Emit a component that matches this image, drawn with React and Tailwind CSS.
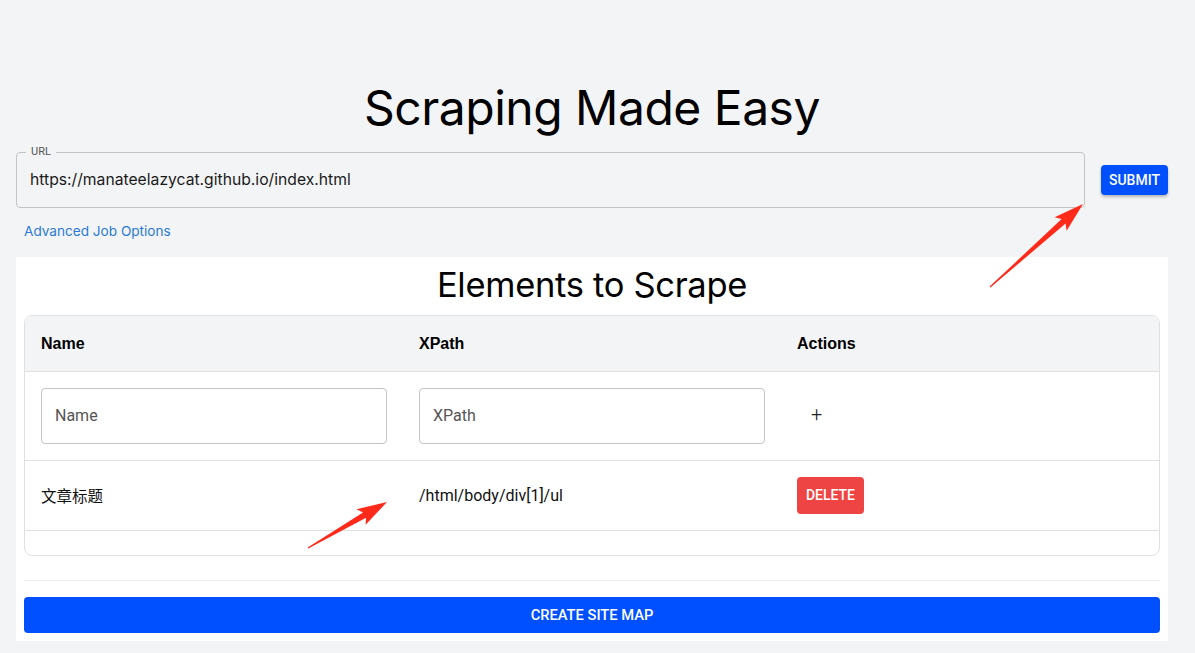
import React from 'react'

// red annotation arrow, drawn from tail to tip
const Arrow = ({ x1, y1, x2, y2 }) => {
  const dx = x2 - x1
  const dy = y2 - y1
  const len = Math.hypot(dx, dy)
  const ux = dx / len
  const uy = dy / len
  const nx = -uy
  const ny = ux
  const at = (d, w) => `${x1 + ux * d + nx * w},${y1 + uy * d + ny * w}`
  const head = 26
  const pts = [
    at(0, 0.6),
    at(len - head, 3),
    at(len - head - 4, 9),
    at(len, 0),
    at(len - head - 4, -9),
    at(len - head, -3),
    at(0, -0.6),
  ].join(' ')
  return <polygon points={pts} fill="#ff2a1a" />
}

const App = () => {
  return (
    <div className="relative min-h-screen bg-[#f3f4f6] font-['Inter',sans-serif]">
      <div className="pl-4 pr-[27px] pt-[84px] pb-3">
        <h1 className="text-center text-[48px] leading-[48px] text-black tracking-[-0.5px]">
          Scraping Made Easy
        </h1>

        <div className="mt-5 flex items-center gap-4">
          <div className="relative flex-1 h-14 rounded border border-[#c4c4c4]">
            <span className="absolute -top-[8px] left-[9px] bg-[#f3f4f6] px-[5px] text-[11px] leading-[14px] text-[#555] font-['Roboto',sans-serif]">
              URL
            </span>
            <div className="flex h-full items-center px-[13px] text-[15.7px] text-[#1a1a1a]">
              https://manateelazycat.github.io/index.html
            </div>
          </div>
          <button className="h-[30px] w-[67px] rounded bg-[#0050ff] text-[14px] font-medium uppercase text-white shadow-[0_2px_3px_rgba(0,0,0,0.25)] font-['Roboto',sans-serif]">
            Submit
          </button>
        </div>

        <div className="mt-[13px] pl-2 text-[13.6px] leading-5 text-[#2a7ad6]">
          Advanced Job Options
        </div>

        <div className="mt-4 bg-white p-2">
          <h2 className="text-center text-[34.5px] leading-[40px] text-black tracking-[-0.3px]">
            Elements to Scrape
          </h2>

          <div className="mt-[10px] overflow-hidden rounded-lg border border-[#e0e0e0] font-['Roboto',sans-serif] text-[16px] text-[#111]">
            <div className="grid h-14 grid-cols-3 items-center border-b border-[#e0e0e0] bg-[#f3f4f6] font-bold font-['Liberation_Sans',sans-serif] text-black">
              <div className="px-4">Name</div>
              <div className="px-4">XPath</div>
              <div className="px-4">Actions</div>
            </div>

            <div className="grid h-[89px] grid-cols-3 items-center border-b border-[#e0e0e0]">
              <div className="px-4">
                <div className="flex h-14 items-center rounded border border-[#c4c4c4] px-[13px] text-[#555]">
                  Name
                </div>
              </div>
              <div className="px-4">
                <div className="flex h-14 items-center rounded border border-[#c4c4c4] px-[13px] text-[#555]">
                  XPath
                </div>
              </div>
              <div className="px-4">
                <span className="ml-[14px] text-[20px] font-light leading-none text-[#222]">+</span>
              </div>
            </div>

            <div className="grid h-[70px] grid-cols-3 items-center border-b border-[#e0e0e0]">
              <div className="px-4 font-['Noto_Sans_CJK_SC',sans-serif] text-[15.5px]">文章标题</div>
              <div className="px-4">/html/body/div[1]/ul</div>
              <div className="px-4">
                <button className="h-[37px] w-[67px] rounded bg-[#ef4444] text-[14px] font-medium uppercase text-white">
                  Delete
                </button>
              </div>
            </div>

            <div className="h-6" />
          </div>

          <div className="mt-6 border-t border-[#eeeeee]" />

          <button className="mt-4 h-9 w-full rounded bg-[#0050ff] text-[14.7px] font-medium uppercase text-white font-['Roboto',sans-serif]">
            Create Site Map
          </button>
        </div>
      </div>

      <svg className="pointer-events-none absolute left-0 top-0" width="1195" height="653">
        <Arrow x1={990} y1={287} x2={1083} y2={204} />
        <Arrow x1={308} y1={548} x2={387} y2={502} />
      </svg>
    </div>
  )
}

export default App
